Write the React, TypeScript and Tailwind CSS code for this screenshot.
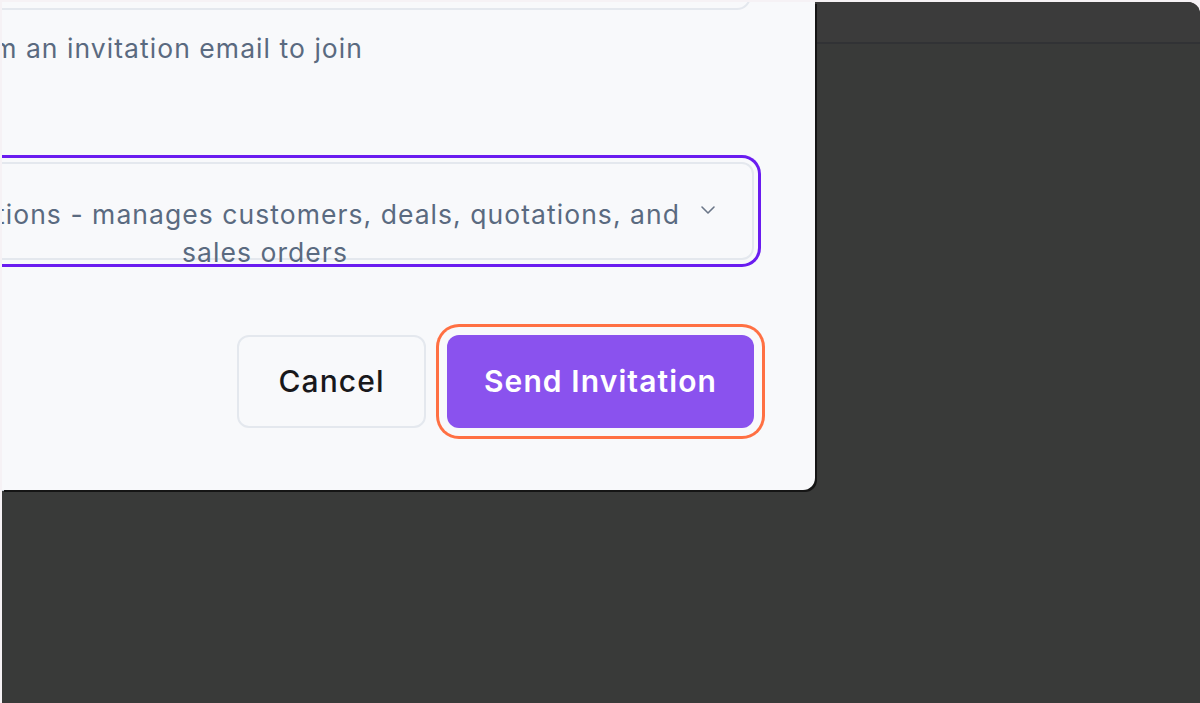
import React from "react";

export default function App() {
  return (
    <div className="w-[1200px] h-[703px] overflow-hidden bg-[#f6f2f5] pl-[2px] pt-[2px] font-['Inter',sans-serif]">
      <div className="relative flex h-full flex-col rounded-tr-[12px] bg-[#393a39]">
        <div className="h-[42px] border-b-2 border-[#313235] bg-[#3b3b3b] rounded-tr-[12px]" />
        <div className="flex-1" />

        {/* Dialog */}
        <div className="absolute left-0 top-0 h-[488px] w-[813px] overflow-hidden rounded-br-[12px] bg-[#f8f9fb] shadow-[2px_2px_0_0_#151515,0_1px_0_0_#c9ced6]">
          <div className="ml-[-300px] flex flex-col pr-[61px]">
            {/* email input (bottom part visible) */}
            <div className="mt-[-52px] h-[60px] mr-[3px] rounded-[14px] border-2 border-[#e4e8ee] bg-[#f8f9fb]" />

            {/* description */}
            <div className="mt-[21px] flex h-[34px] w-[661px] items-center justify-end whitespace-nowrap text-[26.5px] leading-[34px] tracking-[1.05px] text-[#5a6a80]">
              Send them an invitation email to join
            </div>

            {/* select */}
            <div className="mt-[97px] flex h-[98px] items-start rounded-[12px] border-2 border-[#e4e8ee] bg-[#f8f9fb] pl-[146px] pr-[37px] shadow-[0_0_0_4px_#f8f9fb,0_0_0_7px_#6a1cf0]">
              <div className="mt-[31px] w-[830px] text-[26.5px] leading-[38px] tracking-[1.05px] text-[#5a6a80]">
                <div className="flex justify-end whitespace-nowrap">
                  Sales &amp; Operations - manages customers, deals, quotations, and
                </div>
                <div className="text-center">sales orders</div>
              </div>
              <svg
                className="ml-[20px] mt-[41px] shrink-0"
                width="16"
                height="10"
                viewBox="0 0 16 10"
                fill="none"
              >
                <path d="M2 2l6 6 6-6" stroke="#6b7688" strokeWidth="1.6" strokeLinecap="round" strokeLinejoin="round" />
              </svg>
            </div>

            {/* buttons */}
            <div className="mt-[75px] flex justify-end gap-[21px]">
              <button className="h-[93px] w-[189px] rounded-[12px] border-2 border-[#e4e8ee] bg-[#f8f9fb] text-[30px] font-medium tracking-[1.1px] text-[#18181b]">
                Cancel
              </button>
              <button className="h-[93px] w-[307px] rounded-[12px] bg-[#8a52ee] text-[30px] font-semibold tracking-[1.1px] text-white shadow-[0_0_0_8px_#f8f9fb,0_0_0_11px_#ff7043]">
                Send Invitation
              </button>
            </div>
          </div>
        </div>
      </div>
    </div>
  );
}
